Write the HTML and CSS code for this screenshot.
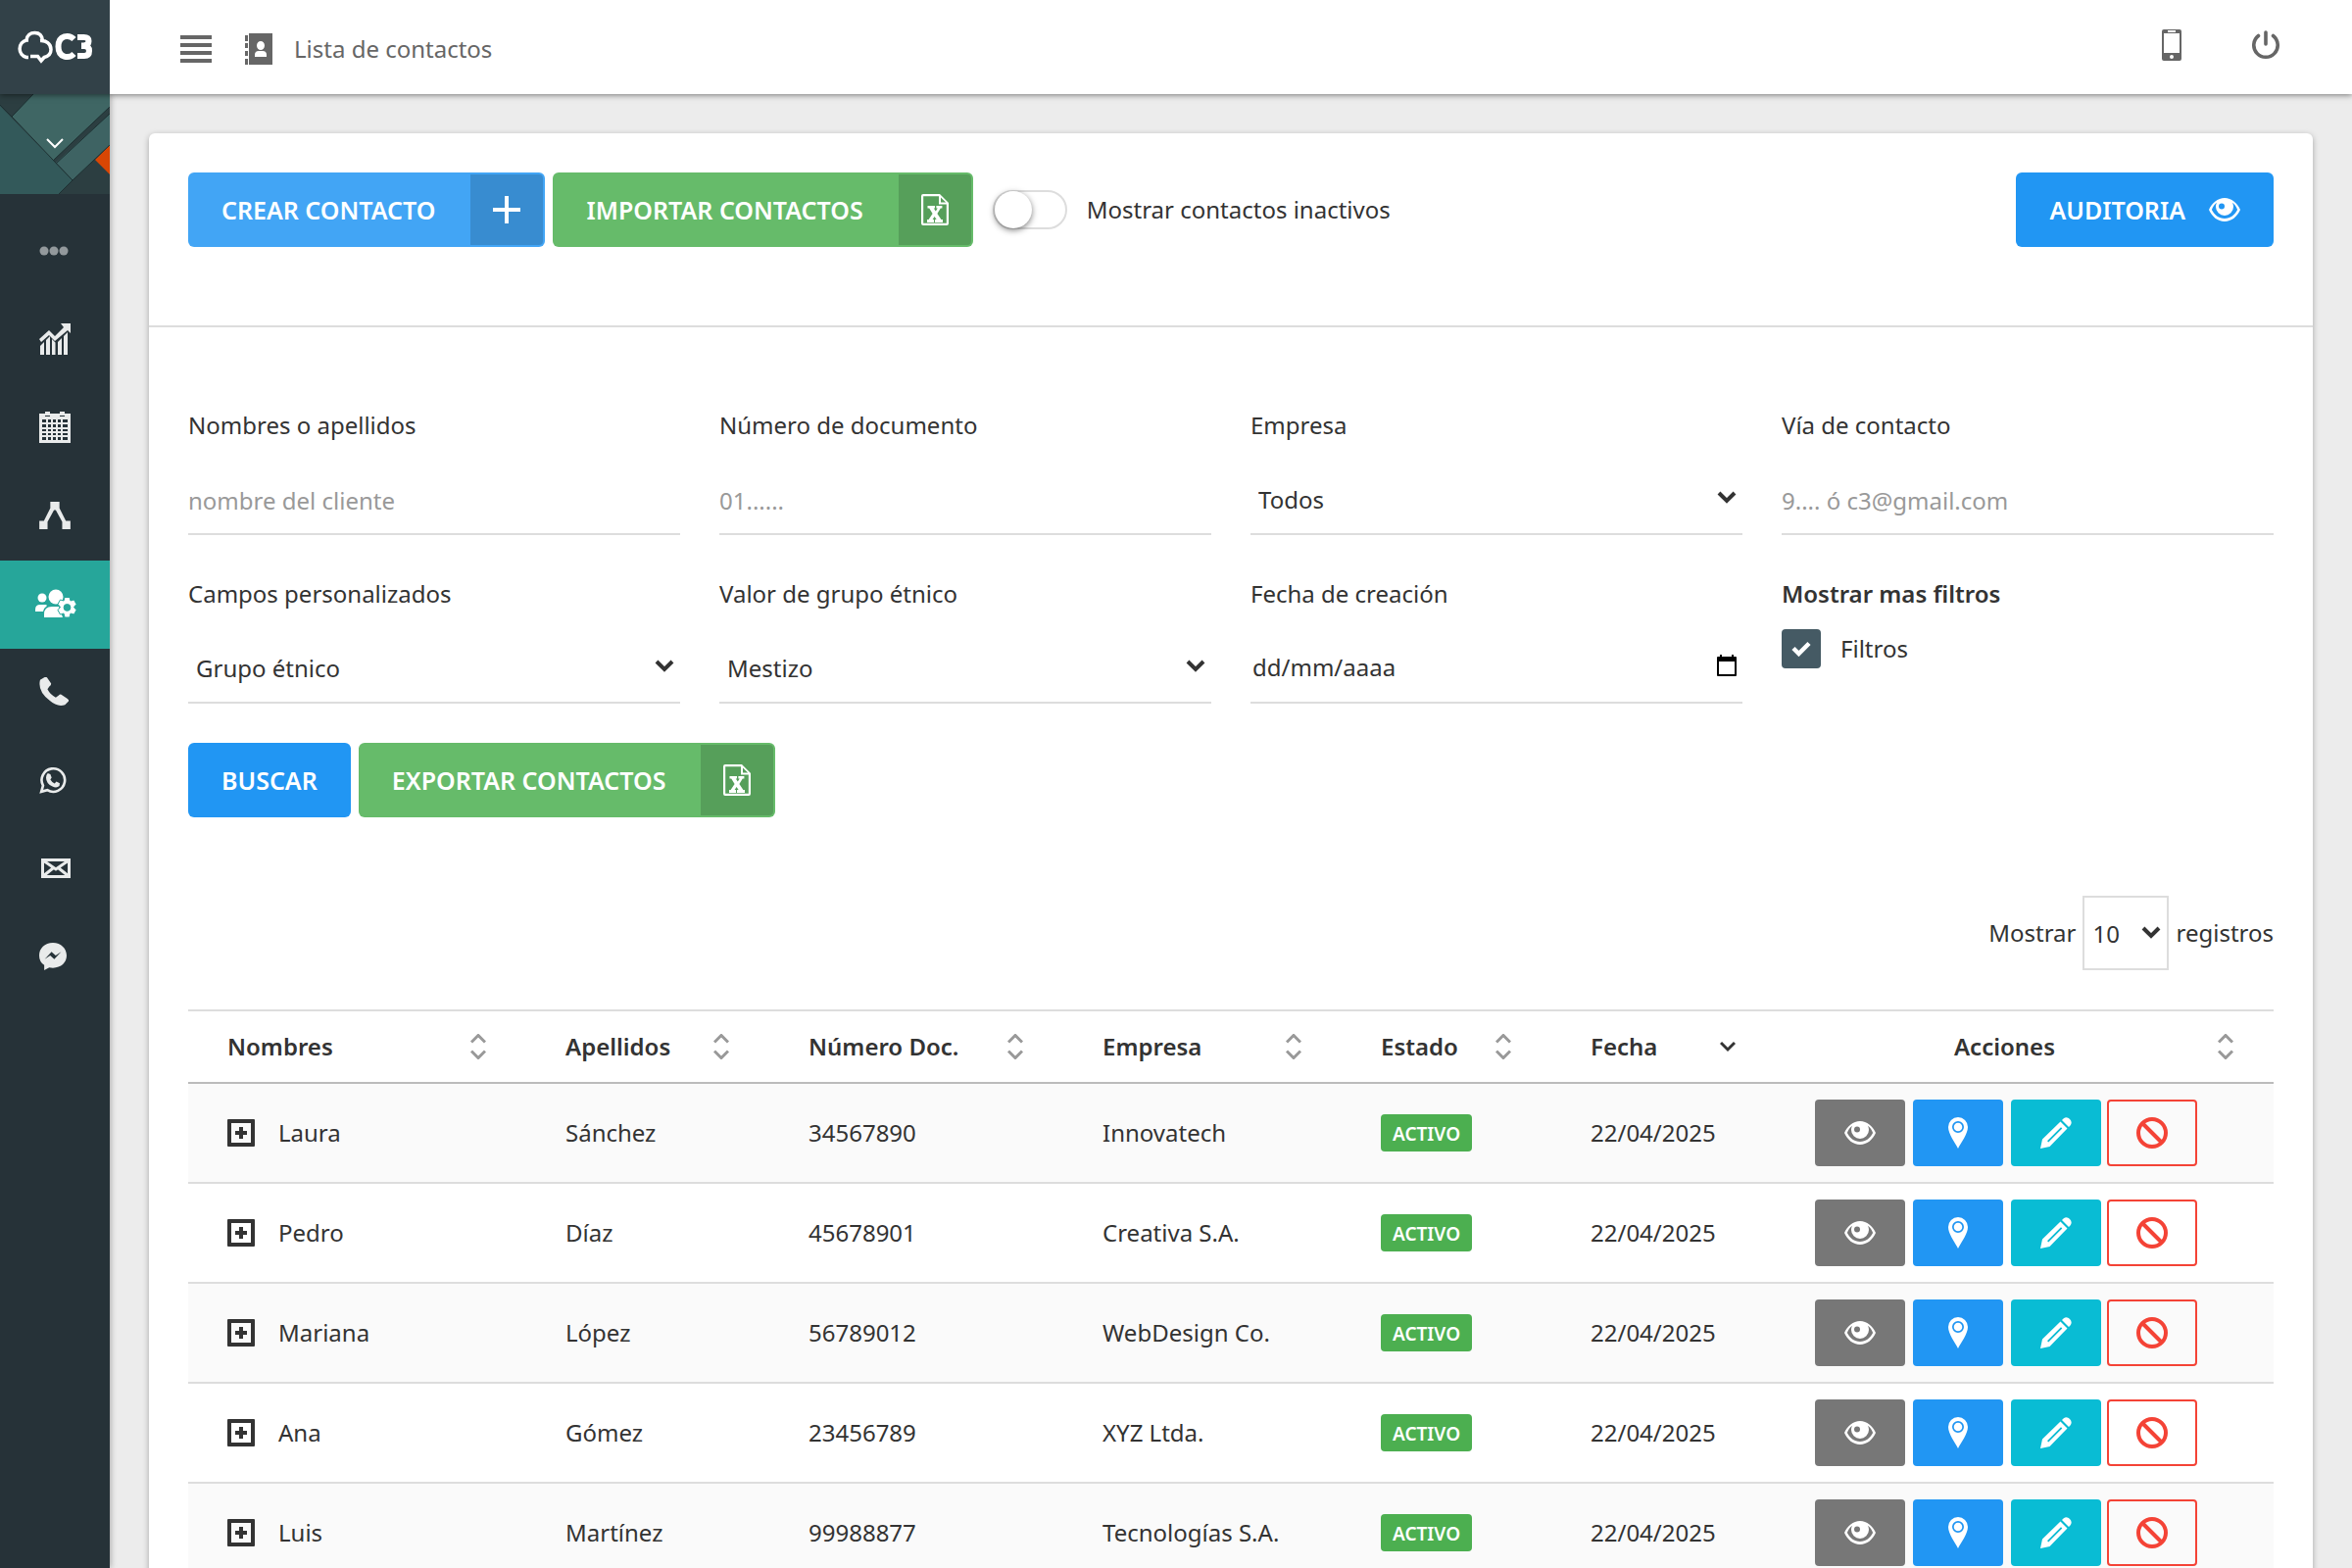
FILE: index.html
```html
<!DOCTYPE html>
<html lang="es">
<head>
<meta charset="utf-8">
<title>Lista de contactos</title>
<link rel="stylesheet" href="styles.css">
</head>
<body>
<svg class="sprite" aria-hidden="true">
  <symbol id="eye" viewBox="0 0 32 24"><path fill-rule="evenodd" d="M16 0C9 0 3 5 0 12c3 7 9 12 16 12s13-5 16-12C29 5 23 0 16 0zM8.200 4.800C7.300 6.200 7 7.600 7 9a9 9 0 0 0 18 0c0-1.400-.3-2.800-1.200-4.200 2.400 1.600 4.200 4 5.300 7.200-2.300 5-7.300 9-13.100 9S5.200 17 2.900 12c1.100-3.200 2.900-5.600 5.300-7.200zM13 5.500a3 3 0 1 1 0 6 3 3 0 0 1 0-6z"/></symbol>
  <symbol id="excel" viewBox="0 0 28 32"><path fill-rule="evenodd" d="M2 0h17l9 9v21q0 2-2 2H2q-2 0-2-2V2q0-2 2-2zm.2 2.200v27.600h23.600V10.500H18V2.200zM20 3.500V8.600h5.200z"/><path d="M6.500 12h7.500v2.500h-1.200l2 3 2-3h-1.400V12h6v2.500h-1.600l-3.400 5.500 4 6h1.600v3h-8v-3h1.600l-2-3-2 3h1.400v3H6v-3h1.600l4-6L8.200 14.500H6.500z"/></symbol>
  <symbol id="pin" viewBox="0 0 20 32"><path fill-rule="evenodd" d="M10 0a10 10 0 0 0-10 10c0 7 7 16 10 22 3-6 10-15 10-22A10 10 0 0 0 10 0zm0 4a6 6 0 1 1 0 12 6 6 0 0 1 0-12zm0 1.700a4.300 4.300 0 1 0 0 8.600 4.300 4.300 0 0 0 0-8.600z"/></symbol>
  <symbol id="pencil" viewBox="0 0 32 32"><path fill-rule="evenodd" d="M23.500 1.500a5 5 0 0 1 7 7l-1.500 1.500-7-7zM2 22.500L0 32l9.500-2L27.500 11.500l-7-7zM21 10.200l1.300 1.300-14 14L7 24.200z"/></symbol>
  <symbol id="ban" viewBox="0 0 32 32"><path fill="none" stroke="currentColor" stroke-width="4" d="M16 2a14 14 0 1 0 0 28 14 14 0 0 0 0-28zM6 6l20 20"/></symbol>
  <symbol id="expand" viewBox="0 0 28 28"><path fill-rule="evenodd" d="M1 0h26q1 0 1 1v26q0 1-1 1H1q-1 0-1-1V1q0-1 1-1zm3 4v20h20V4z"/><path d="M12 8h4v4h4v4h-4v4h-4v-4H8v-4h4z"/></symbol>
  <symbol id="caret" viewBox="0 0 20 13"><path fill="none" stroke="currentColor" stroke-width="4" d="M2 2l8 8 8-8"/></symbol>
  <symbol id="sort" viewBox="0 0 16 26"><path fill="none" stroke="currentColor" stroke-width="3" d="M1 8.500l7-7 7 7M1 17.500l7 7 7-7"/></symbol>
  <symbol id="desc" viewBox="0 0 16 26"><path fill="none" stroke="currentColor" stroke-width="3" d="M1 9l7 7 7-7"/></symbol>
</svg>

<header class="topbar">
  <a class="brand" href="#" aria-label="C3">
    <svg width="80" height="34" viewBox="0 0 80 34"><g fill="none" stroke="#fff" stroke-width="3.500"><path d="M13 27.500h-2A9 9 0 0 1 11 10h2M11 10c.5-5 4-7.500 8.500-7.500s7.500 3 8 8M25 10.500c6-.5 11 3 11 9 0 4.500-3 7-7 8l-3 3.500-3.500-4.500H15"/><path stroke-width="6" d="M59.500 9c-5-5-16-4.500-16 7.500s11 12.500 16 7.500M63 7h6.500q5 0 5 4t-5 4.500H67M67 16h3q5 0 5 5t-5 5H63"/></g></svg>
  </a>
  <button class="icon-btn menu-btn" aria-label="Menú"><svg width="32" height="28"><path d="M0 0h32v4H0zM0 8h32v4H0zM0 16h32v4H0zM0 24h32v4H0z"/></svg></button>
  <h1 class="page-title">
    <svg width="28" height="32" viewBox="0 0 28 32"><path fill-rule="evenodd" d="M4 0h24v32H4zM16 8a4 4.500 0 1 0 0 9 4 4.500 0 0 0 0-9zM10 24h12v-2q0-4-4-4h-4q-4 0-4 4z"/><path d="M0 2h3v6H0zM0 10h3v5H0zM0 18h3v5H0zM0 26h3v6H0z"/></svg>
    Lista de contactos
  </h1>
  <nav class="top-actions">
    <button class="icon-btn" aria-label="Móvil"><svg width="20" height="32" viewBox="0 0 20 32"><path fill-rule="evenodd" d="M2 0h16q2 0 2 2v28q0 2-2 2H2q-2 0-2-2V2q0-2 2-2zm0 4v20h16V4zm4-3v2h8V1zM10 26a2 2 0 1 0 0 4 2 2 0 0 0 0-4z"/></svg></button>
    <button class="icon-btn" aria-label="Salir"><svg width="28" height="30" viewBox="0 0 28 30"><path fill="none" stroke="currentColor" stroke-width="3.600" stroke-linecap="round" d="M14 2v12M6.500 5.500a12.200 12.200 0 1 0 15 0"/></svg></button>
  </nav>
</header>

<div class="shell">
  <aside class="sidebar">
    <button class="user-toggle" aria-label="Usuario">
      <svg viewBox="0 0 112 102" width="112" height="102"><path fill="#2c3e41" d="M0 0h112v102H0z"/><path fill="#3f6664" d="M34 0h78v13L54 68 12 23z"/><path fill="#3e6363" d="M112 20v32L74 88 57 70z"/><path fill="#33595a" d="M0 12l74 76-14 14H0z"/><path fill="#d94604" d="M112 52v30L97 67z"/><path fill="none" stroke="#1d3032" d="M34 0L12 23l-12-12M12 23l62 65-14 14M54 68l58-55M57 71l55-51M74 88l38-36"/><path fill="none" stroke="#fff" stroke-width="2" d="M48 46l8 8 8-8"/></svg>
    </button>
    <nav class="menu">
      <a class="menu-item menu-item-muted" href="#" aria-label="Principal"><svg width="30" height="10"><circle cx="5" cy="5" r="4.500"/><circle cx="15" cy="5" r="4.500"/><circle cx="25" cy="5" r="4.500"/></svg></a>
      <a class="menu-item" href="#" aria-label="Estadísticas"><svg width="32" height="32" viewBox="0 0 32 32"><path d="M1 23l4-4v13H1zM7 17l4-4v19H7zM13 16l3.500 3.500V32H13zM19 19l4-4v17h-4zM25 13l4-4v23h-4zM22 0h10v10l-3-3-13 11-6-6-8 7-2-3 10-9 6 6 9-9z"/></svg></a>
      <a class="menu-item" href="#" aria-label="Calendario"><svg width="32" height="32" viewBox="0 0 32 32"><path fill-rule="evenodd" d="M0 2h6V0h5v2h10V0h5v2h6v30H0zM6 4v1h5V4zm15 0v1h5V4zM3 8v21h26V8z"/><path fill="none" stroke="currentColor" stroke-width="2" d="M8 8v21M13 8v21M18 8v21M23 8v21M3 12h26M3 17h26M3 21h26M3 25h26"/></svg></a>
      <a class="menu-item" href="#" aria-label="Flujos"><svg width="32" height="28" viewBox="0 0 34 30"><path d="M12 0h10v7l7 14h5v9h-9v-8L18 9h-2L9 22v8H0v-9h5l7-14z"/></svg></a>
      <a class="menu-item menu-item-active" href="#" aria-label="Contactos"><svg width="42" height="30" viewBox="0 0 42 30"><circle cx="7" cy="9" r="4.500"/><path d="M0 23v-2q0-5 5-5h6l1 1q-3 2-4 6z"/><ellipse cx="21" cy="8" rx="7.500" ry="7.500"/><path d="M9 29v-3q0-8 8-8h7l4 11z"/><path fill-rule="evenodd" stroke="#26a69a" d="M30 8.500h5l1 3.500 3.500-1 2.500 4.500-2.500 3 2.500 3-2.500 4.500-3.500-1-1 4h-5l-1-4-3.500 1-2.500-4.500 2.500-3-2.500-3 2.500-4.500 3.500 1zM32.500 15.500a3.400 3.400 0 1 0 0 6.800 3.400 3.400 0 0 0 0-6.800z"/></svg></a>
      <a class="menu-item" href="#" aria-label="Llamadas"><svg width="30" height="30" viewBox="0 0 32 32"><path d="M1 3l5-3q2-.5 3 1l4 6q0 2-2 3l-2 3q3 6 9 9l3-2q2-2 3-1l6 4q3 2 2 3l-4 4q-8 3-17-5Q-2 15 1 3z"/></svg></a>
      <a class="menu-item" href="#" aria-label="WhatsApp"><svg width="28" height="28" viewBox="0 0 32 32"><path fill="none" stroke="currentColor" stroke-width="3" d="M2.500 29.500l2-7A13.500 13.500 0 1 1 9.500 27.700z"/><path d="M10 8l3 1 1.500 4-1.500 2.500q2 3.500 5 4.500l2-2.200 4 2-.5 3q-3 3-8 .7Q8 20 8 13q0-3 2-5z"/></svg></a>
      <a class="menu-item" href="#" aria-label="Correo"><svg width="32" height="20" viewBox="0 0 32 20"><path fill="none" stroke="currentColor" stroke-width="3" d="M3.500 1.500h27v17h-27zM4 2l13 9 13-9M4 18l10-8M30 18l-10-8"/></svg></a>
      <a class="menu-item" href="#" aria-label="Messenger"><svg width="28" height="28" viewBox="0 0 30 30"><path fill-rule="evenodd" d="M15 0C6 0 0 6 0 14q0 7 5.500 10.500V30l5.500-3q2 .5 4 .5c9 0 15-6 15-13.500S24 0 15 0zM6 18l7.500-8 4.500 4 6-4-7.500 8-4.500-4z"/></svg></a>
    </nav>
  </aside>

  <main class="content">
    <section class="card">
      <div class="toolbar">
        <button class="btn btn-sky btn-labeled">CREAR CONTACTO<span class="btn-icon"><svg width="28" height="28"><path d="M12 0h4v12h12v4H16v12h-4V16H0v-4h12z"/></svg></span></button>
        <button class="btn btn-green btn-labeled">IMPORTAR CONTACTOS<span class="btn-icon"><svg width="28" height="32"><use href="#excel"/></svg></span></button>
        <label class="switch"><input type="checkbox" class="switch-input">Mostrar contactos inactivos</label>
        <button class="btn btn-blue btn-audit">AUDITORIA<svg width="32" height="24"><use href="#eye"/></svg></button>
      </div>

      <form class="filters" onsubmit="return false">
        <div class="field"><label for="nombre">Nombres o apellidos</label><input class="control" id="nombre" type="text" placeholder="nombre del cliente"></div>
        <div class="field"><label for="doc">Número de documento</label><input class="control" id="doc" type="text" placeholder="01......"></div>
        <div class="field"><label for="empresa">Empresa</label><div class="select"><select class="control" id="empresa"><option>Todos</option></select><svg width="20" height="13"><use href="#caret"/></svg></div></div>
        <div class="field"><label for="via">Vía de contacto</label><input class="control" id="via" type="text" placeholder="9.... ó c3@gmail.com"></div>
        <div class="field"><label for="campos">Campos personalizados</label><div class="select"><select class="control" id="campos"><option>Grupo étnico</option></select><svg width="20" height="13"><use href="#caret"/></svg></div></div>
        <div class="field"><label for="valor">Valor de grupo étnico</label><div class="select"><select class="control" id="valor"><option>Mestizo</option></select><svg width="20" height="13"><use href="#caret"/></svg></div></div>
        <div class="field"><label for="fecha">Fecha de creación</label><div class="select date"><input class="control" id="fecha" type="text" placeholder="dd/mm/aaaa"><svg width="20" height="22" viewBox="0 0 20 22"><path fill="#000" fill-rule="evenodd" d="M3 0h2v2h10V0h2v2h2q1 0 1 1v18q0 1-1 1H1q-1 0-1-1V3q0-1 1-1h2zM2 7v13h16V7z"/></svg></div></div>
        <div class="field"><strong class="field-title">Mostrar mas filtros</strong><label class="check"><input type="checkbox" class="check-input" checked><svg width="20" height="16" viewBox="0 0 20 16"><path fill="none" stroke="currentColor" stroke-width="4.500" d="M2 7.500l5.500 5.500L18 2.500"/></svg>Filtros</label></div>
        <div class="form-actions">
          <button class="btn btn-blue">BUSCAR</button>
          <button class="btn btn-green btn-labeled" type="button">EXPORTAR CONTACTOS<span class="btn-icon"><svg width="28" height="32"><use href="#excel"/></svg></span></button>
        </div>
      </form>

      <div class="length">
        <label for="len">Mostrar</label>
        <div class="select select-box"><select class="control" id="len"><option>10</option></select><svg width="20" height="13"><use href="#caret"/></svg></div>
        <span>registros</span>
      </div>

      <table class="grid">
        <colgroup><col class="c-name"><col class="c-last"><col class="c-doc"><col class="c-company"><col class="c-state"><col class="c-date"><col class="c-actions"></colgroup>
        <thead><tr>
          <th><div class="th">Nombres<svg width="16" height="26"><use href="#sort"/></svg></div></th>
          <th><div class="th">Apellidos<svg width="16" height="26"><use href="#sort"/></svg></div></th>
          <th><div class="th">Número Doc.<svg width="16" height="26"><use href="#sort"/></svg></div></th>
          <th><div class="th">Empresa<svg width="16" height="26"><use href="#sort"/></svg></div></th>
          <th><div class="th">Estado<svg width="16" height="26"><use href="#sort"/></svg></div></th>
          <th><div class="th th-sorted">Fecha<svg width="16" height="26"><use href="#desc"/></svg></div></th>
          <th><div class="th th-center"><span>Acciones</span><svg width="16" height="26"><use href="#sort"/></svg></div></th>
        </tr></thead>
        <tbody id="rows"></tbody>
      </table>
    </section>
  </main>
</div>
<script src="app.js"></script>
</body>
</html>
```
FILE: styles.css
```css
* { box-sizing: border-box; }
body {
  margin: 0;
  height: 100vh;
  display: flex;
  flex-direction: column;
  overflow: hidden;
  background: #ececec;
  color: #333;
  font: 24px/40px "Noto Sans", "Open Sans", sans-serif;
}
button, input, select { font: inherit; color: inherit; }
button { border: 0; padding: 0; background: none; cursor: pointer; }
svg { display: block; flex: none; fill: currentColor; }
.sprite { display: none; }

/* Top bar */
.topbar {
  flex: none;
  display: flex;
  align-items: center;
  height: 96px;
  background: #fff;
  color: #666;
  box-shadow: 0 1px 6px rgba(0, 0, 0, .5);
  z-index: 2;
}
.brand {
  display: flex;
  align-items: center;
  justify-content: center;
  width: 112px;
  height: 96px;
  background: #324148;
}
.icon-btn { color: #666; }
.menu-btn { margin: 4px 34px 0 72px; }
.page-title {
  display: flex;
  align-items: center;
  gap: 22px;
  margin: 4px 0 0;
  font-size: 24px;
  font-weight: 400;
}
.top-actions { display: flex; align-items: center; gap: 72px; margin: 0 74px 4px auto; }

.shell { flex: 1; display: flex; min-height: 0; }

/* Sidebar */
.sidebar {
  flex: none;
  width: 112px;
  background: #263238;
  box-shadow: 1px 0 6px rgba(0, 0, 0, .3);
  z-index: 1;
}
.user-toggle { display: block; margin-bottom: 14px; }
.menu-item {
  display: flex;
  align-items: center;
  height: 90px;
  padding: 0 0 2px 40px;
  color: #e9ebeb;
}
.menu-item-muted { color: #93999c; }
.menu-item-active { padding-left: 36px; background: #26a69a; color: #fff; }

/* Card */
.content { flex: 1; min-width: 0; padding: 40px; overflow: hidden; }
.card {
  background: #fff;
  border-radius: 6px;
  box-shadow: 0 2px 6px rgba(0, 0, 0, .3);
}
.toolbar {
  display: flex;
  align-items: center;
  gap: 8px;
  padding: 40px 40px 80px;
  border-bottom: 2px solid #ddd;
}

/* Buttons */
.btn {
  display: inline-flex;
  align-items: center;
  height: 76px;
  padding: 0 34px;
  border-radius: 6px;
  color: #fff;
  font-size: 25px;
  font-weight: 600;
  white-space: nowrap;
}
.btn-sky { background: #42a5f5; }
.btn-blue { background: #2196f3; }
.btn-green { background: #66bb6a; }
.btn-labeled { gap: 36px; padding-right: 2px; }
.btn-icon {
  display: flex;
  align-items: center;
  justify-content: center;
  width: 74px;
  height: 72px;
  border-radius: 0 4px 4px 0;
  background: rgba(0, 0, 0, .15);
}
.btn-audit { gap: 24px; margin-left: auto; }

.switch { display: flex; align-items: center; gap: 20px; margin-left: 12px; }
.switch-input {
  appearance: none;
  width: 76px;
  height: 40px;
  margin: 0;
  border: 2px solid #ddd;
  border-radius: 20px;
  background: #fff;
}
.switch-input::before {
  content: "";
  display: block;
  width: 38px;
  height: 38px;
  margin-top: -1px;
  border-radius: 50%;
  background: #fff;
  box-shadow: 0 2px 6px rgba(0, 0, 0, .5);
}

/* Filters */
.filters {
  display: grid;
  grid-template-columns: repeat(4, 1fr);
  gap: 40px;
  padding: 80px 40px;
}
.field { display: flex; flex-direction: column; height: 132px; }
.field-title { font-weight: 600; }
.control {
  width: 100%;
  height: 76px;
  margin-top: 16px;
  padding: 6px 0 0;
  border: 0;
  border-bottom: 2px solid #ddd;
  border-radius: 0;
  background: transparent;
  appearance: none;
  outline: 0;
}
.control::placeholder { color: #999; opacity: 1; }
.select { display: grid; align-items: center; }
.select > * { grid-area: 1 / 1; }
.select > svg { justify-self: end; margin: 14px 6px 0 0; pointer-events: none; }
.select select.control { padding-left: 8px; }
.date .control { padding: 2px 0 0 2px; }
.date .control::placeholder { color: #333; }
.check { display: flex; align-items: center; gap: 20px; margin-top: 16px; }
.check-input {
  appearance: none;
  width: 40px;
  height: 40px;
  margin: 0;
  border-radius: 4px;
  background: #455a64;
}
.check svg { margin: 0 10px 0 -50px; color: #fff; }
.form-actions { grid-column: 1 / -1; display: flex; gap: 8px; }

/* Page length */
.length {
  display: flex;
  align-items: center;
  justify-content: flex-end;
  gap: 7px;
  padding: 0 40px 40px;
}
.select-box { width: 88px; }
.select-box .control { margin: 0; padding-top: 2px; border: 2px solid #ddd; }
.select-box > svg { margin: 0 8px 2px 0; }

/* Table */
.grid {
  width: calc(100% - 80px);
  margin: 0 40px;
  table-layout: fixed;
  border-collapse: separate;
  border-spacing: 0;
}
.c-name { width: 345px; }
.c-last { width: 248px; }
.c-doc { width: 300px; }
.c-company { width: 284px; }
.c-state { width: 214px; }
.c-date { width: 229px; }
.c-actions { width: 508px; }
.grid th {
  height: 76px;
  padding: 0 41px 0 40px;
  border-top: 2px solid #ddd;
  border-bottom: 2px solid #bbb;
  font-weight: 600;
  text-align: left;
  white-space: nowrap;
}
.th { display: flex; align-items: center; justify-content: space-between; }
.th svg { color: #999; }
.th-sorted svg { color: #333; }
.th-center span { flex: 1; padding-right: 24px; text-align: center; }
.grid td { height: 102px; padding: 0 40px; border-bottom: 2px solid #ddd; white-space: nowrap; }
.grid tbody tr:nth-child(odd) { background: #fafafa; }
.name { display: flex; align-items: center; gap: 24px; }
.badge {
  display: block;
  width: max-content;
  height: 38px;
  padding: 0 12px;
  border-radius: 4px;
  background: #4caf50;
  color: #fff;
  font-size: 19px;
  font-weight: 600;
  line-height: 40px;
}
.actions { display: flex; gap: 8px; }
.act {
  display: flex;
  align-items: center;
  justify-content: center;
  width: 92px;
  height: 68px;
  border-radius: 4px;
  color: #fff;
}
.act-view { background: #777; }
.act-map { background: #2196f3; }
.act-edit { background: #09bcd4; }
.act-ban { margin-left: -2px; border: 2px solid #f44336; color: #f44336; }
```
FILE: app.js
```js
const contacts = [
  ["Laura", "Sánchez", "34567890", "Innovatech"],
  ["Pedro", "Díaz", "45678901", "Creativa S.A."],
  ["Mariana", "López", "56789012", "WebDesign Co."],
  ["Ana", "Gómez", "23456789", "XYZ Ltda."],
  ["Luis", "Martínez", "99988877", "Tecnologías S.A."]
];
const icon = (id, w, h) => `<svg width="${w}" height="${h}"><use href="#${id}"/></svg>`;
document.getElementById("rows").innerHTML = contacts.map(([name, last, doc, company]) => `
  <tr>
    <td><div class="name"><button aria-label="Expandir">${icon("expand", 28, 28)}</button>${name}</div></td>
    <td>${last}</td>
    <td>${doc}</td>
    <td>${company}</td>
    <td><span class="badge">ACTIVO</span></td>
    <td>22/04/2025</td>
    <td><div class="actions">
      <button class="act act-view" aria-label="Ver">${icon("eye", 32, 24)}</button>
      <button class="act act-map" aria-label="Ubicación">${icon("pin", 20, 32)}</button>
      <button class="act act-edit" aria-label="Editar">${icon("pencil", 32, 32)}</button>
      <button class="act act-ban" aria-label="Desactivar">${icon("ban", 32, 32)}</button>
    </div></td>
  </tr>`).join("");
```
